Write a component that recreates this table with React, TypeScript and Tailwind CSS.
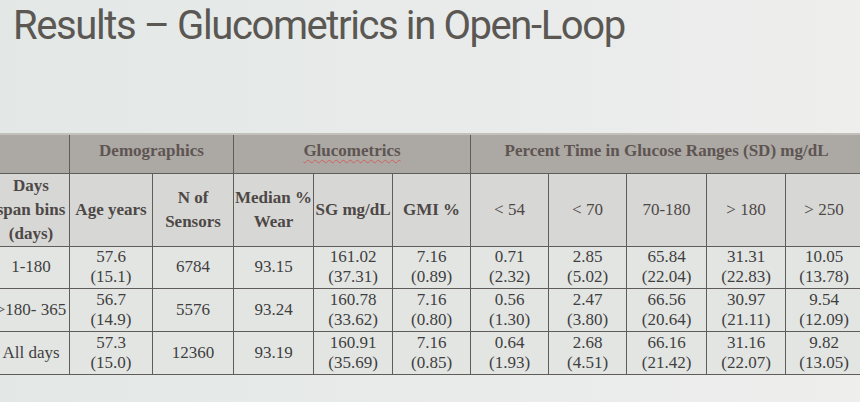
const widths = [77, 83, 81, 80, 79, 78, 78, 78, 80, 79, 77];

type Row = {
  label: string;
  age: [string, string];
  sensors: string;
  wear: string;
  values: [string, string][];
};

const rows: Row[] = [
  {
    label: '1-180',
    age: ['57.6', '(15.1)'],
    sensors: '6784',
    wear: '93.15',
    values: [
      ['161.02', '(37.31)'],
      ['7.16', '(0.89)'],
      ['0.71', '(2.32)'],
      ['2.85', '(5.02)'],
      ['65.84', '(22.04)'],
      ['31.31', '(22.83)'],
      ['10.05', '(13.78)'],
    ],
  },
  {
    label: '>180- 365',
    age: ['56.7', '(14.9)'],
    sensors: '5576',
    wear: '93.24',
    values: [
      ['160.78', '(33.62)'],
      ['7.16', '(0.80)'],
      ['0.56', '(1.30)'],
      ['2.47', '(3.80)'],
      ['66.56', '(20.64)'],
      ['30.97', '(21.11)'],
      ['9.54', '(12.09)'],
    ],
  },
  {
    label: 'All days',
    age: ['57.3', '(15.0)'],
    sensors: '12360',
    wear: '93.19',
    values: [
      ['160.91', '(35.69)'],
      ['7.16', '(0.85)'],
      ['0.64', '(1.93)'],
      ['2.68', '(4.51)'],
      ['66.16', '(21.42)'],
      ['31.16', '(22.07)'],
      ['9.82', '(13.05)'],
    ],
  },
];

const rowHeights = ['h-[42px]', 'h-[43px]', 'h-[43px]'];

function Stack({ top, bottom }: { top: string; bottom: string }) {
  return (
    <div className="flex flex-col items-center leading-[20px]">
      <span>{top}</span>
      <span>{bottom}</span>
    </div>
  );
}

export default function App() {
  return (
    <div className="w-[860px] h-[402px] overflow-hidden bg-gradient-to-r from-[#e3e8e7] via-[#e8ebea] to-[#eeeeed]">
      <h1
        className="pl-[13px] pt-[2px] text-[40px] leading-[48px] tracking-[-0.035em] text-[#5b5753]"
        style={{ fontFamily: 'Roboto, "Noto Sans", sans-serif' }}
      >
        Results – Glucometrics in Open-Loop
      </h1>

      <div className="mt-[83px] ml-[-8px]" style={{ fontFamily: '"Liberation Serif", serif' }}>
        <table className="table-fixed border-collapse w-[870px] text-center">
          <colgroup>
            {widths.map((w, i) => (
              <col key={i} style={{ width: w }} />
            ))}
          </colgroup>
          <thead>
            {/* group headings */}
            <tr className="h-[39px] bg-[#aca8a4] text-[17px] font-bold text-[#5e5552] border-t-2 border-[#c3c0bc]">
              <th className="border-x border-b border-[#5f5c5a]" />
              <th colSpan={2} className="border-x border-b border-[#5f5c5a] pb-[6px]">
                Demographics
              </th>
              <th colSpan={3} className="border-x border-b border-[#5f5c5a] pb-[6px]">
                <span className="underline decoration-wavy decoration-[#d0625a] decoration-1 underline-offset-[3px]">
                  Glucometrics
                </span>
              </th>
              <th colSpan={5} className="border-x border-b border-[#5f5c5a] pb-[6px]">
                Percent Time in Glucose Ranges (SD) mg/dL
              </th>
            </tr>
            {/* column headings */}
            <tr className="h-[70px] bg-[#d7d7d5] text-[17px] font-bold text-[#4d4846] leading-[24px]">
              <th className="border border-[#5f5c5a] whitespace-nowrap">
                Days
                <br />
                span bins
                <br />
                (days)
              </th>
              <th className="border border-[#5f5c5a] whitespace-nowrap">Age years</th>
              <th className="border border-[#5f5c5a]">
                N of
                <br />
                Sensors
              </th>
              <th className="border border-[#5f5c5a] whitespace-nowrap">
                Median %
                <br />
                Wear
              </th>
              <th className="border border-[#5f5c5a] whitespace-nowrap">SG mg/dL</th>
              <th className="border border-[#5f5c5a]">GMI %</th>
              <th className="border border-[#5f5c5a] font-normal">&lt; 54</th>
              <th className="border border-[#5f5c5a] font-normal">&lt; 70</th>
              <th className="border border-[#5f5c5a] font-normal">70-180</th>
              <th className="border border-[#5f5c5a] font-normal">&gt; 180</th>
              <th className="border border-[#5f5c5a] font-normal">&gt; 250</th>
            </tr>
          </thead>
          <tbody className="bg-[#e3e5e3] text-[17px] text-[#3f3f3f]">
            {rows.map((r, i) => (
              <tr key={r.label} className={rowHeights[i]}>
                <td className="border border-[#5f5c5a] whitespace-nowrap">{r.label}</td>
                <td className="border border-[#5f5c5a]">
                  <Stack top={r.age[0]} bottom={r.age[1]} />
                </td>
                <td className="border border-[#5f5c5a]">{r.sensors}</td>
                <td className="border border-[#5f5c5a]">{r.wear}</td>
                {r.values.map(([a, b], j) => (
                  <td key={j} className="border border-[#5f5c5a]">
                    <Stack top={a} bottom={b} />
                  </td>
                ))}
              </tr>
            ))}
          </tbody>
        </table>
      </div>
    </div>
  );
}
